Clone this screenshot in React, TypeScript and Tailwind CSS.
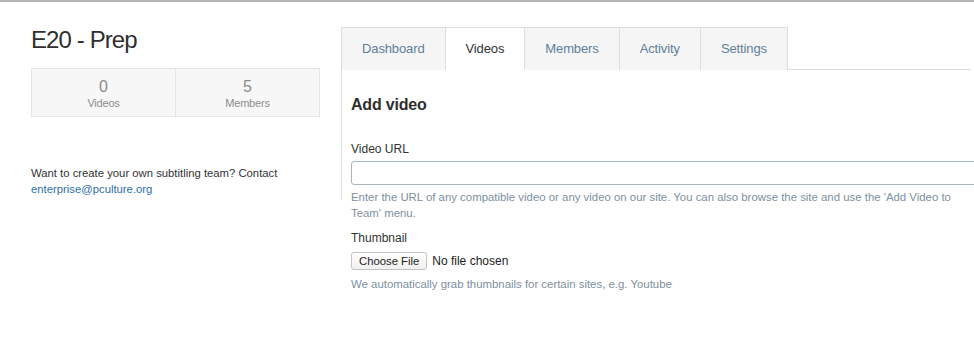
import React from 'react';

const tabs = ['Dashboard', 'Videos', 'Members', 'Activity', 'Settings'];

const Stat = ({ value, label, last }: { value: number; label: string; last?: boolean }) => (
  <div className={`flex-1 pt-[10px] pb-[6px] text-center text-[#8c8c8c] ${last ? '' : 'border-r border-[#e5e5e5]'}`}>
    <div className="text-[16px] leading-[16px]">{value}</div>
    <div className="mt-[1px] text-[11px] leading-[14px] tracking-[-0.2px]">{label}</div>
  </div>
);

export default function App() {
  const active = 'Videos';

  return (
    <div className="h-[358px] w-[974px] overflow-hidden border-t-2 border-[#b5b5b5] bg-white font-['Liberation_Sans',Arial,sans-serif] text-[#333]">
      <div className="flex pl-[31px] pt-[25px]">
        {/* left column */}
        <div className="w-[289px] shrink-0">
          <h1 className="mt-[1px] text-[24px] leading-[24px] tracking-[-0.9px] text-[#2f2f2f]">E20 - Prep</h1>
          <div className="mt-[16px] flex border border-[#e5e5e5] bg-[#f7f7f7]">
            <Stat value={0} label="Videos" />
            <Stat value={5} label="Members" last />
          </div>
          <p className="mt-[48px] text-[11.3px] leading-[16px]">
            Want to create your own subtitling team? Contact{' '}
            <a href="#" className="text-[#2f6ea8]">enterprise@pculture.org</a>
          </p>
        </div>

        {/* right column */}
        <div className="ml-[21px] w-[660px] shrink-0">
          <ul className="flex w-[630px] border-b border-[#dddddd]">
            {tabs.map((t) => (
              <li
                key={t}
                className={`-mb-px flex h-[43px] items-center border-t border-r border-[#dddddd] px-[20px] text-[13px] tracking-[-0.12px] first:border-l ${
                  t === active ? 'border-b border-b-white bg-white text-[#333]' : 'bg-[#f5f5f5] text-[#5f7f99]'
                }`}
              >
                {t}
              </li>
            ))}
          </ul>

          <div className="flex">
            <div className="h-[130px] w-px shrink-0 bg-[#dddddd]" />
            <div className="flex-1 pl-[9px]">
              <h2 className="mt-[25px] text-[16px] leading-[20px] font-bold tracking-[-0.2px] text-[#2f2f2f]">Add video</h2>

              <label className="mt-[27px] block text-[12px] leading-[14px]">Video URL</label>
              <input
                type="text"
                className="mt-[5px] block h-[24px] w-[650px] rounded-[3px] border border-[#aab4bd] bg-white"
              />
              <p className="mt-[4px] w-[620px] text-[11.4px] leading-[16px] text-[#7d8fa0]">
                Enter the URL of any compatible video or any video on our site. You can also browse the site and use the 'Add Video to Team' menu.
              </p>

              <label className="mt-[10px] block text-[12px] leading-[14px]">Thumbnail</label>
              <div className="mt-[7px] flex items-center gap-[5px]">
                <button className="h-[18px] rounded-[3px] border border-[#c4c4c4] bg-gradient-to-b from-white to-[#f0f0f0] px-[7px] text-[11.3px] leading-[16px] text-[#222]">
                  Choose File
                </button>
                <span className="text-[12px] text-[#222]">No file chosen</span>
              </div>
              <p className="mt-[7px] text-[11.4px] leading-[14px] text-[#7d8fa0]">
                We automatically grab thumbnails for certain sites, e.g. Youtube
              </p>
            </div>
          </div>
        </div>
      </div>
    </div>
  );
}
